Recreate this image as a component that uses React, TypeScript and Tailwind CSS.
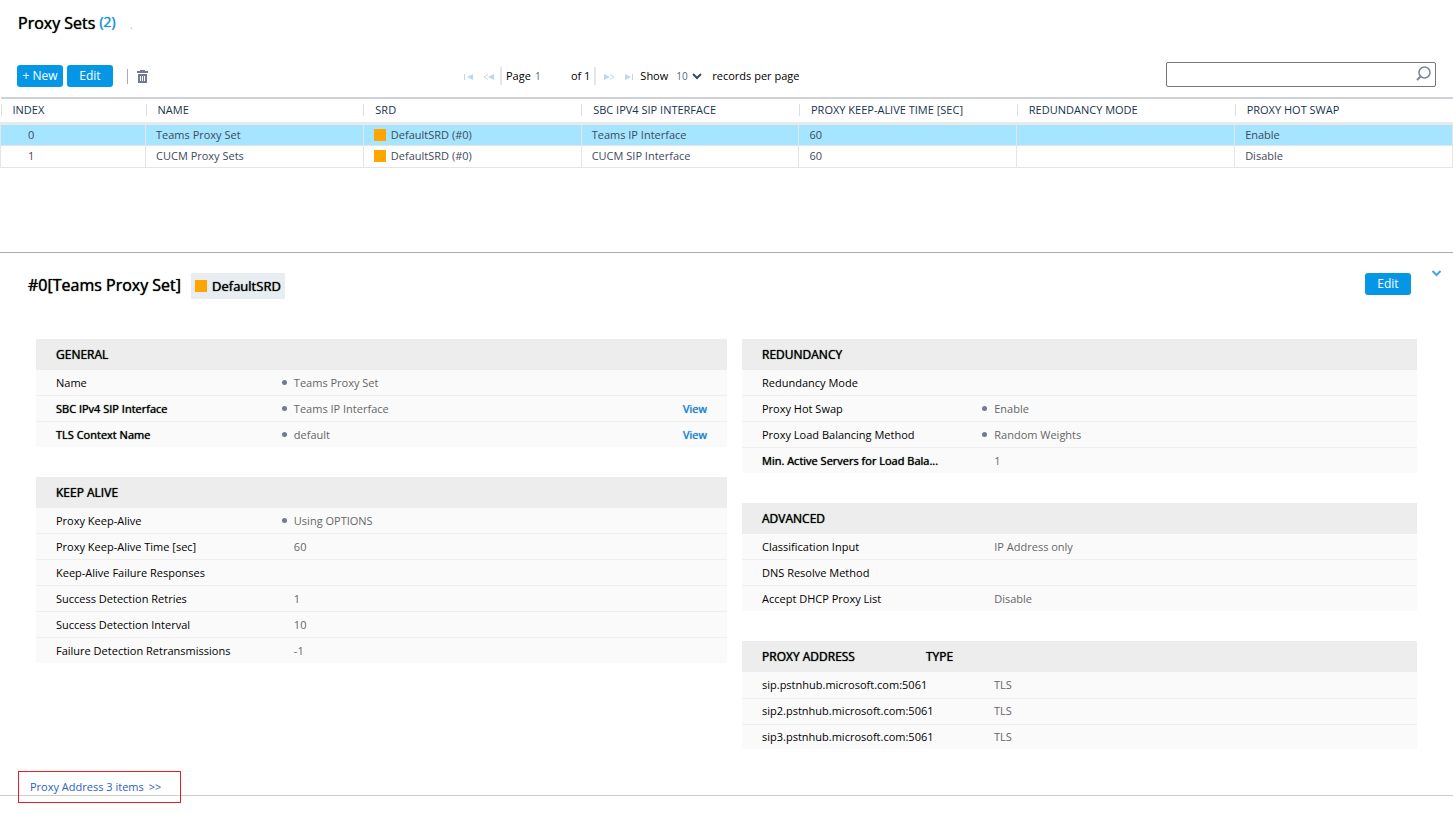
import React, { useState } from 'react';

interface ProxySet {
  index: number;
  name: string;
  srd: string;
  sipInterface: string;
  keepAliveTime: string;
  redundancyMode: string;
  hotSwap: string;
}

interface Field {
  label: string;
  value?: string;
  changed?: boolean;
  strong?: boolean;
  view?: boolean;
}

const columns = [
  'INDEX',
  'NAME',
  'SRD',
  'SBC IPV4 SIP INTERFACE',
  'PROXY KEEP-ALIVE TIME [SEC]',
  'REDUNDANCY MODE',
  'PROXY HOT SWAP',
];

const proxySets: ProxySet[] = [
  { index: 0, name: 'Teams Proxy Set', srd: 'DefaultSRD (#0)', sipInterface: 'Teams IP Interface', keepAliveTime: '60', redundancyMode: '', hotSwap: 'Enable' },
  { index: 1, name: 'CUCM Proxy Sets', srd: 'DefaultSRD (#0)', sipInterface: 'CUCM SIP Interface', keepAliveTime: '60', redundancyMode: '', hotSwap: 'Disable' },
];

const general: Field[] = [
  { label: 'Name', value: 'Teams Proxy Set', changed: true },
  { label: 'SBC IPv4 SIP Interface', value: 'Teams IP Interface', changed: true, strong: true, view: true },
  { label: 'TLS Context Name', value: 'default', changed: true, strong: true, view: true },
];

const keepAlive: Field[] = [
  { label: 'Proxy Keep-Alive', value: 'Using OPTIONS', changed: true },
  { label: 'Proxy Keep-Alive Time [sec]', value: '60' },
  { label: 'Keep-Alive Failure Responses' },
  { label: 'Success Detection Retries', value: '1' },
  { label: 'Success Detection Interval', value: '10' },
  { label: 'Failure Detection Retransmissions', value: '-1' },
];

const redundancy: Field[] = [
  { label: 'Redundancy Mode' },
  { label: 'Proxy Hot Swap', value: 'Enable', changed: true },
  { label: 'Proxy Load Balancing Method', value: 'Random Weights', changed: true },
  { label: 'Min. Active Servers for Load Bala...', value: '1', strong: true },
];

const advanced: Field[] = [
  { label: 'Classification Input', value: 'IP Address only' },
  { label: 'DNS Resolve Method' },
  { label: 'Accept DHCP Proxy List', value: 'Disable' },
];

const addresses = [
  { host: 'sip.pstnhub.microsoft.com:5061', type: 'TLS' },
  { host: 'sip2.pstnhub.microsoft.com:5061', type: 'TLS' },
  { host: 'sip3.pstnhub.microsoft.com:5061', type: 'TLS' },
];

const TrashIcon = () => (
  <svg width="11" height="13" viewBox="0 0 11 13" fill="#737b92">
    <path d="M3 0h5v1h3v2H0V1h3z" />
    <path fillRule="evenodd" d="M1 4h9v9H1zM3 6v5h1V6zM5 6v5h1V6zM7 6v5h1V6z" />
  </svg>
);

const SearchIcon = () => (
  <svg width="15" height="15" viewBox="0 0 15 15" fill="none" stroke="#7d859b">
    <circle cx="8.500" cy="6.500" r="5.500" strokeWidth="1.500" />
    <path d="M4.500 10.500L1 14" strokeWidth="2" />
  </svg>
);

const PagerButton: React.FC<{ label: string; children: React.ReactNode }> = ({ label, children }) => (
  <button type="button" aria-label={label} disabled className="mt-px">
    <svg width="11" height="7" viewBox="0 0 11 7" fill="#bcd8ee">
      {children}
    </svg>
  </button>
);

const Section: React.FC<{ title: string; fields: Field[] }> = ({ title, fields }) => (
  <section>
    <h3 className="h-[31px] bg-[#ededed] pl-5 text-xs leading-[31px] [text-shadow:0_0_1px_currentColor]">{title}</h3>
    <dl className="divide-y divide-[#efefef] bg-[#fafafa]">
      {fields.map((field) => (
        <div key={field.label} className="flex h-[26px] items-center last:h-[25px]">
          <dt
            className={
              field.strong
                ? 'w-[35%] shrink-0 pl-5 whitespace-nowrap [text-shadow:0_0_1px_currentColor]'
                : 'w-[35%] shrink-0 pl-5 whitespace-nowrap'
            }
          >
            {field.label}
          </dt>
          <dd className="ml-1 flex flex-1 items-center gap-[7px] pr-5 text-[#666]">
            <span className={field.changed ? 'size-[5px] rounded-full bg-[#737b92]' : 'size-[5px]'} />
            {field.value}
            {field.view && (
              <a href="#view" className="ml-auto text-[#1b80cc] [text-shadow:0_0_1px_currentColor]">
                View
              </a>
            )}
          </dd>
        </div>
      ))}
    </dl>
  </section>
);

const App: React.FC = () => {
  const [selected, setSelected] = useState(0);
  const [query, setQuery] = useState('');

  return (
    <div className="min-h-screen bg-white font-['Open_Sans',sans-serif] text-[11px] leading-4 text-black">
      <header className="flex h-[62px] items-start gap-1 pt-[11px] pl-[18px]">
        <h1 className="text-base leading-6 [text-shadow:0_0_1px_currentColor]">Proxy Sets</h1>
        <span className="text-sm leading-[22px] text-[#1b8fe0] [text-shadow:0_0_1px_currentColor]">(2)</span>
        <span className="ml-2.5 leading-7 text-[#aaa]">.</span>
      </header>

      <div className="flex items-end pr-[17px] pl-[17px]">
        <div className="flex w-[31.500%] items-center gap-1">
          <button type="button" className="h-[22px] w-[46px] rounded-[3px] bg-[#0597e6] text-xs text-white">
            + New
          </button>
          <button type="button" className="h-[22px] w-[46px] rounded-[3px] bg-[#0597e6] text-xs text-white">
            Edit
          </button>
          <span className="ml-2.5 h-[15px] w-px bg-[#aaa]" />
          <button type="button" aria-label="Delete" className="ml-[5px]">
            <TrashIcon />
          </button>
        </div>

        <div className="flex h-[22px] items-center">
          <PagerButton label="First page">
            <path d="M0 1h1v6H0zM9 1v6L3 4z" />
          </PagerButton>
          <span className="w-2" />
          <PagerButton label="Previous page">
            <path d="M11 1v6L5 4z" />
            <path d="M5 1.500L1 4l4 2.500" fill="none" stroke="#bcd8ee" />
          </PagerButton>
          <span className="mr-1 ml-1.5 h-[18px] w-0.5 bg-[#e5e5e5]" />
          <label htmlFor="page">Page</label>
          <input id="page" defaultValue="1" className="ml-1 w-9 text-[10px] text-[#56657f] outline-none" />
          <span>of 1</span>
          <span className="mr-2 ml-1 h-[18px] w-0.5 bg-[#e5e5e5]" />
          <PagerButton label="Next page">
            <path d="M0 1v6l6-3z" />
            <path d="M6 1.500L10 4l-4 2.500" fill="none" stroke="#bcd8ee" />
          </PagerButton>
          <span className="w-2" />
          <PagerButton label="Last page">
            <path d="M2 1v6l6-3zM9 1h1v6H9z" />
          </PagerButton>
          <label htmlFor="rows" className="ml-1.5">
            Show
          </label>
          <span className="relative ml-2 flex items-center">
            <select id="rows" defaultValue="10" className="w-[26px] appearance-none text-[10px] text-[#56657f] outline-none">
              <option>10</option>
              <option>20</option>
            </select>
            <svg className="pointer-events-none absolute right-0" width="10" height="7" viewBox="0 0 10 7" fill="none" stroke="#3c4a60" strokeWidth="2">
              <path d="M1 1l4 4 4-4" />
            </svg>
          </span>
          <span className="ml-2.5">records per page</span>
        </div>

        <div className="relative ml-auto">
          <input
            type="search"
            aria-label="Search"
            value={query}
            onChange={(e) => setQuery(e.target.value)}
            className="block h-[25px] w-[270px] rounded-xs border border-[#767676] pr-6 pl-1 outline-none"
          />
          <span className="absolute top-1 right-[5px]">
            <SearchIcon />
          </span>
        </div>
      </div>

      <div className="mt-2.5 h-[155px]">
        <table className="w-full table-fixed border-collapse text-left text-[#3f4a5a]">
          <thead>
            <tr className="h-[25px] border-t-2 border-b-3 border-t-[#cfd2d7] border-b-[#e9e9e9]">
              {columns.map((column) => (
                <th key={column} className="p-0 font-normal whitespace-nowrap text-[#17324d] first:w-[145px]">
                  <div className="border-l border-[#ddd] pl-[11px] leading-3">{column}</div>
                </th>
              ))}
            </tr>
          </thead>
          <tbody>
            {proxySets.map((row) => (
              <tr
                key={row.index}
                onClick={() => setSelected(row.index)}
                className={row.index === selected ? 'h-[22px] bg-[#a5e5ff]' : 'h-[22px]'}
              >
                <td className="border border-[#e5e5e5] p-0 pl-[27px]">{row.index}</td>
                <td className="border border-[#e5e5e5] p-0 pl-2.5">{row.name}</td>
                <td className="border border-[#e5e5e5] p-0 pl-2.5">
                  <div className="flex items-center gap-[5px]">
                    <span className="size-3 bg-[#ffa500]" />
                    {row.srd}
                  </div>
                </td>
                <td className="border border-[#e5e5e5] p-0 pl-2.5">{row.sipInterface}</td>
                <td className="border border-[#e5e5e5] p-0 pl-2.5">{row.keepAliveTime}</td>
                <td className="border border-[#e5e5e5] p-0 pl-2.5">{row.redundancyMode}</td>
                <td className="border border-[#e5e5e5] p-0 pl-2.5">{row.hotSwap}</td>
              </tr>
            ))}
          </tbody>
        </table>
      </div>

      <main className="border-t border-[#aaa] pt-5">
        <div className="flex items-start pr-[11px] pl-7">
          <h2 className="text-base leading-6 [text-shadow:0_0_1px_currentColor]">#0[Teams Proxy Set]</h2>
          <span className="ml-2.5 flex h-[26px] items-center gap-[5px] bg-[#e7edf0] px-1 text-[13px] [text-shadow:0_0_1px_currentColor]">
            <span className="size-3 bg-[#ffa500]" />
            DefaultSRD
          </span>
          <button type="button" className="ml-auto h-[22px] w-[46px] rounded-[3px] bg-[#0597e6] text-xs text-white">
            Edit
          </button>
          <button type="button" aria-label="Collapse" className="-mt-1 ml-5">
            <svg width="11" height="8" viewBox="0 0 11 8" fill="none" stroke="#4da3e0" strokeWidth="2">
              <path d="M1.500 2l4 4 4-4" />
            </svg>
          </button>
        </div>

        <div className="mt-10 grid grid-cols-[691fr_675fr] items-start gap-[15px] pr-9 pl-9">
          <div className="flex flex-col gap-[30px]">
            <Section title="GENERAL" fields={general} />
            <Section title="KEEP ALIVE" fields={keepAlive} />
          </div>
          <div className="flex flex-col gap-[30px]">
            <Section title="REDUNDANCY" fields={redundancy} />
            <Section title="ADVANCED" fields={advanced} />
            <table className="w-full table-fixed border-collapse text-left">
              <thead>
                <tr className="h-[31px] bg-[#ededed] text-xs [text-shadow:0_0_1px_currentColor]">
                  <th className="w-[184px] p-0 pl-5 font-normal">PROXY ADDRESS</th>
                  <th className="w-[68px] p-0 font-normal">TYPE</th>
                  <th className="p-0" />
                </tr>
              </thead>
              <tbody className="divide-y divide-[#efefef] bg-[#fafafa]">
                {addresses.map((address) => (
                  <tr key={address.host} className="h-[26px] last:h-[25px]">
                    <td colSpan={2} className="p-0 pl-5">{address.host}</td>
                    <td className="p-0 text-[#666]">{address.type}</td>
                  </tr>
                ))}
              </tbody>
            </table>
          </div>
        </div>

        <footer className="mt-[22px] flex h-[25px] border-b border-[#ccc] pl-[18px]">
          <a href="#proxy-address" className="flex h-8 w-[163px] items-center gap-[5px] border border-[#ed1c24] pl-[11px] text-[#2a62c4]">
            <span>Proxy Address 3 items</span>
            <span>&gt;&gt;</span>
          </a>
        </footer>
      </main>
    </div>
  );
};

export default App;
